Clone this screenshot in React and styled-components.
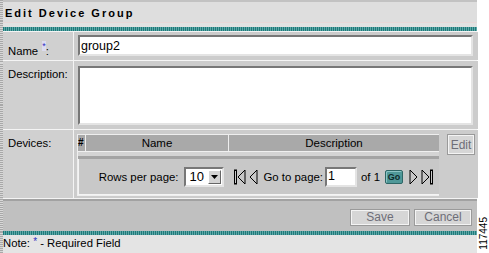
import styled, { createGlobalStyle } from 'styled-components';

const Global = createGlobalStyle`
  html, body {
    margin: 0;
    padding: 0;
    background: #ffffff;
  }
  body {
    font-family: "Liberation Sans", Arial, sans-serif;
    font-size: 11px;
    color: #000;
  }
`;

const Page = styled.div`
  display: flex;
  width: 489px;
  height: 253px;
  overflow: hidden;
`;

const Panel = styled.div`
  width: 474px;
  display: flex;
  flex-direction: column;
  border-left: 3px solid transparent;
  border-image: repeating-linear-gradient(180deg, #d8d8d8 0 1px, #a8a8a8 1px 2px) 3;
`;

const TitleBar = styled.div`
  height: 23px;
  background: #dedede;
  border-top: 2px solid #c2c2c2;
  border-bottom: 1px solid #e8d8d8;
  display: flex;
  align-items: center;
  padding: 2px 0 0 2px;
  box-sizing: border-box;
  font-weight: bold;
  font-size: 11px;
  letter-spacing: 2px;
`;

const Spacer = styled.div`
  height: ${p => p.h}px;
  background: ${p => p.bg};
`;

const TealBar = styled.div`
  height: 4px;
  background: repeating-linear-gradient(90deg, #1f7a7a 0 1px, #5fa8a8 1px 2px);
`;

const Form = styled.div`
  display: grid;
  grid-template-columns: 70px 1fr;
  grid-template-rows: 28px 68px 68px;
  gap: 1px;
  background: #f4f4f4;
  padding-top: 1px;
`;

const Label = styled.div`
  background: #d0d0d0;
  padding: ${p => p.top || 9}px 0 0 5px;
  font-size: 11.3px;
  sup {
    color: #3030c0;
    font-size: 9px;
    background: #dcdcf0;
    vertical-align: 6px;
    margin-left: 1px;
  }
`;

const Value = styled.div`
  background: #cccccc;
  padding: ${p => p.pad || '3px 5px 0 4px'};
  display: flex;
  gap: 8px;
  align-items: flex-start;
`;

const TextInput = styled.div`
  flex: 1;
  height: ${p => p.h}px;
  box-sizing: border-box;
  background: #fff;
  border-top: 2px solid #777;
  border-left: 2px solid #777;
  border-right: 2px solid #e4e4e4;
  border-bottom: 2px solid #e4e4e4;
  font-size: 12.5px;
  padding: 2px 0 0 1px;
`;

const Table = styled.div`
  width: 361px;
  display: flex;
  flex-direction: column;
  border: 1px solid #eeeeee;
  border-right: none;
`;

const HeaderRow = styled.div`
  display: grid;
  grid-template-columns: 7px 142px 1fr;
  gap: 1px;
  background: #eeeeee;
  height: 16px;
`;

const HeadCell = styled.div`
  background: #a9a9a9;
  text-align: ${p => p.left ? 'left' : 'center'};
  font-size: ${p => p.left ? 10 : 11.5}px;
  font-weight: ${p => p.left ? 'bold' : 'normal'};
  line-height: 16px;
`;

const BodyGap = styled.div`
  height: 4px;
  background: #d4d4d4;
  border-top: 1px solid #f0f0f0;
  border-bottom: 3px solid #a4a4a4;
`;

const Pager = styled.div`
  height: 35px;
  display: flex;
  align-items: center;
  justify-content: flex-end;
  padding-right: 6px;
  background: #c8c8c8;
  border-left: 1px solid #f4f4f4;
  border-bottom: 1px solid #f4f4f4;
  font-size: 11.4px;
`;

const Select = styled.div`
  width: 40px;
  height: 20px;
  box-sizing: border-box;
  margin: 0 10px 0 6px;
  background: #fff;
  border-top: 2px solid #777;
  border-left: 2px solid #777;
  border-right: 2px solid #e4e4e4;
  border-bottom: 2px solid #e4e4e4;
  display: flex;
  align-items: center;
  justify-content: space-between;
  font-size: 13px;
  padding-left: 3px;
`;

const Arrow = styled.span`
  width: 13px;
  height: 14px;
  box-sizing: border-box;
  background: #d4d4d4;
  border: 1px solid #fff;
  border-right-color: #666;
  border-bottom-color: #666;
  display: flex;
  align-items: center;
  justify-content: center;
  margin-right: 1px;
`;

const NavIcon = styled.svg`
  width: ${p => p.w}px;
  height: 16px;
  margin-right: ${p => p.mr || 0}px;
`;

const PageInput = styled.div`
  width: 32px;
  height: 20px;
  box-sizing: border-box;
  margin: 0 4px 0 2px;
  background: #fff;
  border-top: 2px solid #777;
  border-left: 2px solid #777;
  border-right: 2px solid #e4e4e4;
  border-bottom: 2px solid #e4e4e4;
  font-size: 12.5px;
  padding-left: 1px;
`;

const GoButton = styled.div`
  width: 18px;
  height: 14px;
  box-sizing: border-box;
  margin: 0 6px 0 5px;
  background: #4f9898;
  border: 1px solid #2e6666;
  border-radius: 2px;
  box-shadow: inset 1px 1px 0 #8cc4c4;
  font-size: 9px;
  font-weight: bold;
  color: #0e2a2a;
  display: flex;
  align-items: center;
  justify-content: center;
`;

const Button = styled.div`
  width: ${p => p.w}px;
  height: ${p => p.h || 17}px;
  box-sizing: border-box;
  background: #d6d6d6;
  border: 1px solid #9a9a9a;
  box-shadow: inset 1px 1px 0 #f4f4f4, inset -1px -1px 0 #f4f4f4;
  color: #6e6e78;
  font-size: 12px;
  display: flex;
  align-items: center;
  justify-content: center;
`;

const Footer = styled.div`
  height: 32px;
  background: #c0c0c0;
  border-top: 2px solid #a2a2a2;
  display: flex;
  justify-content: flex-end;
  align-items: center;
  gap: 4px;
  padding-right: 5px;
  padding-top: 2px;
  box-sizing: border-box;
`;

const Note = styled.div`
  flex: 1;
  background: #e4e4e4;
  padding: 1px 0 0 0;
  font-size: 11.3px;
  sup {
    color: #3030c0;
    font-size: 10px;
    vertical-align: 2px;
  }
`;

const Side = styled.div`
  flex: 1;
  display: flex;
  align-items: flex-end;
  justify-content: center;
  padding-bottom: 3px;
`;

const FigNum = styled.span`
  writing-mode: vertical-rl;
  transform: rotate(180deg);
  font-size: 10px;
`;

const First = () => (
  <NavIcon w={12} mr={3} viewBox="0 0 12 16">
    <rect x="0.5" y="1" width="2" height="14" fill="none" stroke="#000" strokeWidth="1" />
    <path d="M11 1 L4 8 L11 15 Z" fill="none" stroke="#000" strokeWidth="1" />
  </NavIcon>
);
const Prev = () => (
  <NavIcon w={9} mr={5} viewBox="0 0 9 16">
    <path d="M8 1 L1 8 L8 15 Z" fill="none" stroke="#000" strokeWidth="1" />
  </NavIcon>
);
const Next = () => (
  <NavIcon w={9} mr={3} viewBox="0 0 9 16">
    <path d="M1 1 L8 8 L1 15 Z" fill="none" stroke="#000" strokeWidth="1" />
  </NavIcon>
);
const Last = () => (
  <NavIcon w={12} viewBox="0 0 12 16">
    <path d="M1 1 L8 8 L1 15 Z" fill="none" stroke="#000" strokeWidth="1" />
    <rect x="9.5" y="1" width="2" height="14" fill="none" stroke="#000" strokeWidth="1" />
  </NavIcon>
);

const App = () => {
  return (
    <Page>
      <Global />
      <Panel>
        <TitleBar>Edit Device Group</TitleBar>
        <Spacer h={4} bg="#e2e2e2" />
        <TealBar />
        <Form>
          <Label>Name <sup>*</sup>:</Label>
          <Value>
            <TextInput h={21}>group2</TextInput>
          </Value>
          <Label top={7}>Description:</Label>
          <Value pad="5px 5px 0 4px">
            <TextInput h={59} />
          </Value>
          <Label top={7}>Devices:</Label>
          <Value pad="4px 3px 0 3px">
            <Table>
              <HeaderRow>
                <HeadCell left>#</HeadCell>
                <HeadCell>Name</HeadCell>
                <HeadCell>Description</HeadCell>
              </HeaderRow>
              <BodyGap />
              <Pager>
                Rows per page:
                <Select>
                  10
                  <Arrow>
                    <svg width="7" height="4" viewBox="0 0 7 4"><path d="M0 0 H7 L3.5 4 Z" fill="#000" /></svg>
                  </Arrow>
                </Select>
                <First />
                <Prev />
                Go to page:
                <PageInput>1</PageInput>
                of 1
                <GoButton>Go</GoButton>
                <Next />
                <Last />
              </Pager>
            </Table>
            <Button w={28} h={21}>Edit</Button>
          </Value>
        </Form>
        <Spacer h={1} bg="#f4f4f4" />
        <Footer>
          <Button w={60}>Save</Button>
          <Button w={58}>Cancel</Button>
        </Footer>
        <TealBar />
        <Note>Note: <sup>*</sup> - Required Field</Note>
      </Panel>
      <Side>
        <FigNum>117445</FigNum>
      </Side>
    </Page>
  );
};

export default App;
